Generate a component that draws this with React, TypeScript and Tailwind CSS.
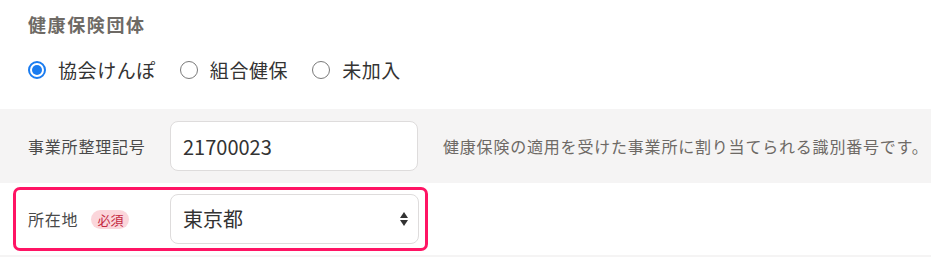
const font = { fontFamily: '"Noto Sans CJK JP", "Noto Sans", sans-serif' }

function Radio({ checked, label }: { checked?: boolean; label: string }) {
  return (
    <label className="flex items-center gap-[12px]">
      {checked ? (
        <span className="flex h-[18px] w-[18px] items-center justify-center rounded-full border-2 border-[#1a7cf0] bg-white">
          <span className="h-[10px] w-[10px] rounded-full bg-[#1a7cf0]" />
        </span>
      ) : (
        <span className="h-[18px] w-[18px] rounded-full border-[1.5px] border-[#7a7a7a] bg-white" />
      )}
      <span className="text-[19px] leading-[28px] tracking-[0.03em] text-[#333]">{label}</span>
    </label>
  )
}

export default function App() {
  return (
    <div className="min-h-[257px] w-[931px] bg-white" style={font}>
      {/* 健康保険団体 */}
      <div className="px-[28px] pt-[11px]">
        <h2 className="text-[18px] font-bold leading-[27px] tracking-[0.09em] text-[#6e6a65]">健康保険団体</h2>
        <div className="mt-[18px] flex items-center gap-[24px]">
          <Radio checked label="協会けんぽ" />
          <Radio label="組合健保" />
          <Radio label="未加入" />
        </div>
      </div>

      {/* 事業所整理記号 */}
      <div className="mt-[25px] flex items-center bg-[#f5f4f4] py-[12px] pl-[28px]">
        <div className="w-[142px] text-[16px] tracking-[0.05em] text-[#4a4a4a]">事業所整理記号</div>
        <input
          readOnly
          value="21700023"
          className="h-[50px] w-[248px] rounded-[8px] border border-[#dedcdc] bg-white px-[12px] text-[20px] text-[#333] outline-none"
          style={font}
        />
        <p className="ml-[25px] whitespace-nowrap text-[16px] tracking-[0.05em] text-[#6d6965]">
          健康保険の適用を受けた事業所に割り当てられる識別番号です。
        </p>
      </div>

      {/* 所在地 */}
      <div className="ml-[13px] mt-[4px] flex w-[415px] items-center rounded-[7px] border-[3px] border-[#ff1464] py-[4px] pl-[12px]">
        <div className="flex w-[142px] items-center gap-[13px]">
          <span className="text-[16px] tracking-[0.05em] text-[#4a4a4a]">所在地</span>
          <span className="rounded-full bg-[#fbd6db] px-[6px] text-[13px] leading-[19px] text-[#c3283f]">必須</span>
        </div>
        <div className="relative h-[50px] w-[249px]">
          <select
            className="h-full w-full appearance-none rounded-[8px] border border-[#dedcdc] bg-white px-[12px] text-[20px] text-[#333] outline-none"
            style={font}
            defaultValue="東京都"
          >
            <option>東京都</option>
          </select>
          <svg className="pointer-events-none absolute right-[11px] top-[18px]" width="8" height="14" viewBox="0 0 8 14">
            <path d="M4 0 L8 6 H0 Z" fill="#333" />
            <path d="M4 14 L8 8 H0 Z" fill="#333" />
          </svg>
        </div>
      </div>

      <div className="mt-[4px] h-[2px] bg-[#f5f4f4]" />
    </div>
  )
}
